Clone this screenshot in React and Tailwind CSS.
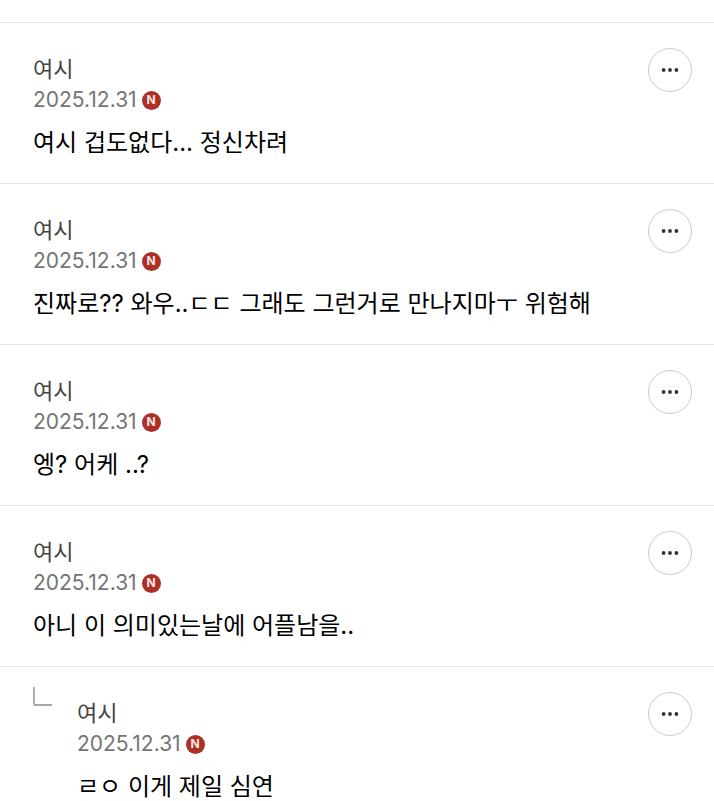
const comments = [
  { id: 1, author: '여시', date: '2025.12.31', text: '여시 겁도없다... 정신차려' },
  { id: 2, author: '여시', date: '2025.12.31', text: '진짜로?? 와우..ㄷㄷ 그래도 그런거로 만나지마ㅜ 위험해' },
  { id: 3, author: '여시', date: '2025.12.31', text: '엥? 어케 ..?' },
  { id: 4, author: '여시', date: '2025.12.31', text: '아니 이 의미있는날에 어플남을..' },
  { id: 5, author: '여시', date: '2025.12.31', text: 'ㄹㅇ 이게 제일 심연', reply: true },
];

function NewBadge() {
  return (
    <span className="flex h-[19px] w-[19px] items-center justify-center rounded-full bg-[#ad3026] text-xs leading-none font-bold text-[#fbe9e4]">
      N
    </span>
  );
}

function MoreButton() {
  return (
    <button
      type="button"
      aria-label="더보기"
      className="flex h-11 w-11 shrink-0 items-center justify-center rounded-full border border-[#cccccc] bg-white"
    >
      <svg className="h-5 w-5" viewBox="0 0 20 20" fill="#333">
        <circle cx="3.6" cy="10" r="1.9" />
        <circle cx="10" cy="10" r="1.9" />
        <circle cx="16.4" cy="10" r="1.9" />
      </svg>
    </button>
  );
}

function Comment({ comment }) {
  return (
    <li className="flex items-start border-t border-[#e6e6e6] pr-[22px] pb-[23px] pl-[33px]">
      {comment.reply && (
        <svg className="mt-5 mr-6 h-5 w-5 shrink-0" viewBox="0 0 20 20" fill="none" stroke="#a6a6a6" strokeWidth="1.8">
          <path d="M0.9 0V17Q0.9 18 1.9 18H19" />
        </svg>
      )}
      <div className="min-w-0 flex-1 pt-[31px]">
        <p className="text-[22px] leading-[30px] text-[#444]">{comment.author}</p>
        <div className="flex items-center gap-[5px]">
          <time className="text-[21px] leading-8 text-[#757575]">{comment.date}</time>
          <NewBadge />
        </div>
        <p className="mt-[10px] text-2xl leading-[34px] text-black">{comment.text}</p>
      </div>
      <div className="pt-[25px]">
        <MoreButton />
      </div>
    </li>
  );
}

export default function App() {
  return (
    <main className="bg-white pt-[22px] font-[Inter,'Noto_Sans_CJK_KR',sans-serif]">
      <ul>
        {comments.map((comment) => (
          <Comment key={comment.id} comment={comment} />
        ))}
      </ul>
    </main>
  );
}
